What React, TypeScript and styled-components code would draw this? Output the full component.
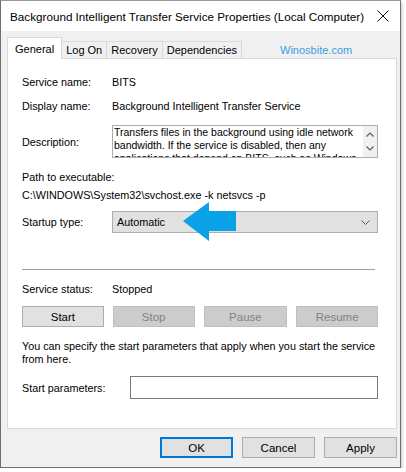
import React from "react";
import styled, { createGlobalStyle } from "styled-components";

const GlobalStyle = createGlobalStyle`
  html, body {
    margin: 0;
    padding: 0;
    background: #ffffff;
  }
  body {
    font-family: "Liberation Sans", Arial, sans-serif;
    font-size: 10.8px;
    color: #000;
  }
`;

const SWindow = styled.div`
  width: 399px;
  height: 466px;
  border: 1px solid #6f6f6f;
  border-top-color: #9a9a9a;
  background: #f0f0f0;
  display: flex;
  flex-direction: column;
  box-shadow: 0 3px 4px rgba(0, 0, 0, 0.35);
`;

const STitleBar = styled.div`
  height: 30px;
  background: #ffffff;
  display: flex;
  align-items: center;
  justify-content: space-between;
  padding-left: 9px;
  padding-right: 10px;
  font-size: 11.7px;
  color: #000;
`;

const SClose = styled.div`
  width: 14px;
  height: 14px;
  display: grid;
  place-items: center;
`;

const SBody = styled.div`
  flex: 1;
  display: flex;
  flex-direction: column;
  padding: 6px 3px 0 6px;
`;

const STabs = styled.div`
  display: flex;
  align-items: flex-end;
  height: 22px;
  position: relative;
  z-index: 1;
`;

const STab = styled.div<{ $active?: boolean }>`
  height: ${(p) => (p.$active ? "22px" : "18px")};
  padding: 0 ${(p) => (p.$active ? "7px" : "4px")};
  display: flex;
  align-items: center;
  background: ${(p) => (p.$active ? "#ffffff" : "#f0f0f0")};
  border: 1px solid #d9d9d9;
  border-bottom: ${(p) => (p.$active ? "none" : "1px solid #d9d9d9")};
  margin-left: ${(p) => (p.$active ? "0" : "-1px")};
  font-size: 11px;
  box-sizing: border-box;
  &:first-child {
    margin-left: 0;
  }
`;

const SMark = styled.div`
  margin-left: 38px;
  align-self: center;
  color: #3aa0e0;
  font-size: 11px;
  padding-top: 4px;
`;

const SPanel = styled.div`
  width: 390px;
  height: 371px;
  margin-top: -1px;
  background: #ffffff;
  border: 1px solid #d9d9d9;
  box-sizing: border-box;
  padding: 16px 18px 0 14px;
  display: flex;
  flex-direction: column;
`;

const SRow = styled.div<{ $top?: number }>`
  display: flex;
  align-items: center;
  margin-top: ${(p) => p.$top ?? 0}px;
`;

const SLabel = styled.div<{ $w?: number }>`
  width: ${(p) => p.$w ?? 90}px;
  flex-shrink: 0;
  line-height: 14px;
`;

const SValue = styled.div`
  line-height: 14px;
`;

const SDescBox = styled.div`
  width: 266px;
  height: 33px;
  border: 1px solid #abadb3;
  box-sizing: border-box;
  display: flex;
  overflow: hidden;
`;

const SDescText = styled.div`
  flex: 1;
  padding: 0 0 0 1px;
  font-size: 10.5px;
  line-height: 13px;
`;

const SScroll = styled.div`
  width: 14px;
  background: #f0f0f0;
  display: flex;
  flex-direction: column;
  align-items: center;
  justify-content: space-around;
  padding: 2px 0;
`;

const SPlain = styled.div<{ $top?: number }>`
  line-height: 14px;
  margin-top: ${(p) => p.$top ?? 0}px;
`;

const SCombo = styled.div`
  width: 266px;
  height: 22px;
  background: #e1e1e1;
  border: 1px solid #adadad;
  box-sizing: border-box;
  display: flex;
  align-items: center;
  justify-content: space-between;
  padding: 0 7px 0 4px;
  position: relative;
`;

const SArrow = styled.svg`
  position: absolute;
  left: 70px;
  top: -10px;
`;

const SDivider = styled.div`
  height: 1px;
  background: #a0a0a0;
  width: 353px;
  margin-top: 36px;
`;

const SButtons = styled.div`
  display: flex;
  gap: 9px;
  margin-top: 10px;
`;

const SButton = styled.div<{ $disabled?: boolean; $w?: number; $focus?: boolean }>`
  width: ${(p) => p.$w ?? 82}px;
  height: 21px;
  box-sizing: border-box;
  background: ${(p) => (p.$disabled ? "#cccccc" : "#e1e1e1")};
  border: 1px solid ${(p) => (p.$focus ? "#0078d7" : p.$disabled ? "#bfbfbf" : "#adadad")};
  box-shadow: ${(p) => (p.$focus ? "inset 0 0 0 1px #0078d7" : "none")};
  color: ${(p) => (p.$disabled ? "#838383" : "#000")};
  display: grid;
  place-items: center;
  font-size: 11.5px;
`;

const SNote = styled.div`
  margin-top: 13px;
  line-height: 13px;
  width: 360px;
`;

const SInput = styled.div`
  width: 249px;
  height: 23px;
  border: 1px solid #7a7a7a;
  box-sizing: border-box;
  background: #fff;
`;

const SFooter = styled.div`
  display: flex;
  justify-content: flex-end;
  gap: 9px;
  margin-top: 8px;
`;

const Caret = ({ up }: { up?: boolean }) => (
  <svg width="8" height="5" viewBox="0 0 8 5">
    <path
      d={up ? "M0.5 4.5 L4 1 L7.5 4.5" : "M0.5 0.5 L4 4 L7.5 0.5"}
      fill="none"
      stroke="#606060"
      strokeWidth="1.2"
    />
  </svg>
);

const App = () => {
  return (
    <>
      <GlobalStyle />
      <SWindow>
        <STitleBar>
          <span>Background Intelligent Transfer Service Properties (Local Computer)</span>
          <SClose>
            <svg width="12" height="12" viewBox="0 0 12 12">
              <path d="M0.5 0.5 L11.5 11.5 M11.5 0.5 L0.5 11.5" stroke="#111" strokeWidth="1" />
            </svg>
          </SClose>
        </STitleBar>
        <SBody>
          <STabs>
            <STab $active>General</STab>
            <STab>Log On</STab>
            <STab>Recovery</STab>
            <STab>Dependencies</STab>
            <SMark>Winosbite.com</SMark>
          </STabs>
          <SPanel>
            <SRow>
              <SLabel>Service name:</SLabel>
              <SValue>BITS</SValue>
            </SRow>
            <SRow $top={10}>
              <SLabel>Display name:</SLabel>
              <SValue>Background Intelligent Transfer Service</SValue>
            </SRow>
            <SRow $top={12}>
              <SLabel>Description:</SLabel>
              <SDescBox>
                <SDescText>
                  Transfers files in the background using idle network bandwidth. If the
                  service is disabled, then any applications that depend on BITS, such as
                  Windows Update or MSN Explorer, will be unable to automatically download
                  programs and other information.
                </SDescText>
                <SScroll>
                  <Caret up />
                  <Caret />
                </SScroll>
              </SDescBox>
            </SRow>
            <SPlain $top={12}>Path to executable:</SPlain>
            <SPlain $top={4}>C:\WINDOWS\System32\svchost.exe -k netsvcs -p</SPlain>
            <SRow $top={9}>
              <SLabel>Startup type:</SLabel>
              <SCombo>
                <span>Automatic</span>
                <svg width="9" height="5" viewBox="0 0 9 5">
                  <path d="M0.5 0.5 L4.5 4.5 L8.5 0.5" fill="none" stroke="#555" strokeWidth="1" />
                </svg>
                <SArrow width="53" height="39" viewBox="0 0 53 39">
                  <polygon points="0,19 26,0 26,9 53,9 53,29 26,29 26,39" fill="#09a2e6" />
                </SArrow>
              </SCombo>
            </SRow>
            <SDivider />
            <SRow $top={12}>
              <SLabel>Service status:</SLabel>
              <SValue>Stopped</SValue>
            </SRow>
            <SButtons>
              <SButton>Start</SButton>
              <SButton $disabled>Stop</SButton>
              <SButton $disabled $w={84}>Pause</SButton>
              <SButton $disabled>Resume</SButton>
            </SButtons>
            <SNote>
              You can specify the start parameters that apply when you start the service
              from here.
            </SNote>
            <SRow $top={10}>
              <SLabel $w={108}>Start parameters:</SLabel>
              <SInput />
            </SRow>
          </SPanel>
          <SFooter>
            <SButton $w={73} $focus>OK</SButton>
            <SButton $w={73}>Cancel</SButton>
            <SButton $w={73}>Apply</SButton>
          </SFooter>
        </SBody>
      </SWindow>
    </>
  );
};

export default App;
